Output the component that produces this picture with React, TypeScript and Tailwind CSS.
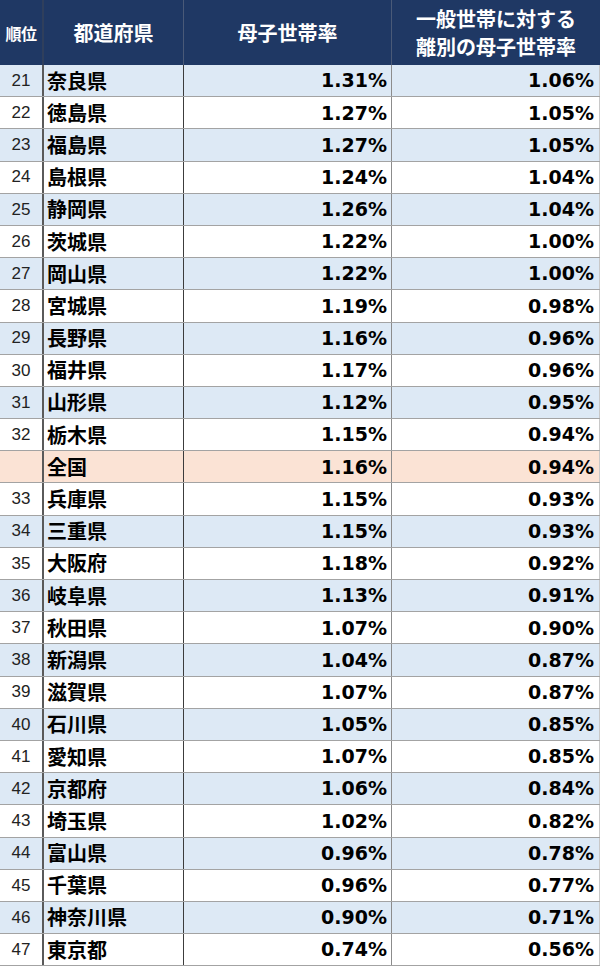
import { FC } from "react";

type Row = { rank: string; name: string; a: string; b: string; kind: "blue" | "white" | "peach" };

const data: [string, string, string, string][] = [
  ["21", "奈良県", "1.31%", "1.06%"],
  ["22", "徳島県", "1.27%", "1.05%"],
  ["23", "福島県", "1.27%", "1.05%"],
  ["24", "島根県", "1.24%", "1.04%"],
  ["25", "静岡県", "1.26%", "1.04%"],
  ["26", "茨城県", "1.22%", "1.00%"],
  ["27", "岡山県", "1.22%", "1.00%"],
  ["28", "宮城県", "1.19%", "0.98%"],
  ["29", "長野県", "1.16%", "0.96%"],
  ["30", "福井県", "1.17%", "0.96%"],
  ["31", "山形県", "1.12%", "0.95%"],
  ["32", "栃木県", "1.15%", "0.94%"],
  ["", "全国", "1.16%", "0.94%"],
  ["33", "兵庫県", "1.15%", "0.93%"],
  ["34", "三重県", "1.15%", "0.93%"],
  ["35", "大阪府", "1.18%", "0.92%"],
  ["36", "岐阜県", "1.13%", "0.91%"],
  ["37", "秋田県", "1.07%", "0.90%"],
  ["38", "新潟県", "1.04%", "0.87%"],
  ["39", "滋賀県", "1.07%", "0.87%"],
  ["40", "石川県", "1.05%", "0.85%"],
  ["41", "愛知県", "1.07%", "0.85%"],
  ["42", "京都府", "1.06%", "0.84%"],
  ["43", "埼玉県", "1.02%", "0.82%"],
  ["44", "富山県", "0.96%", "0.78%"],
  ["45", "千葉県", "0.96%", "0.77%"],
  ["46", "神奈川県", "0.90%", "0.71%"],
  ["47", "東京都", "0.74%", "0.56%"],
];

const rows: Row[] = data.map(([rank, name, a, b], i) => ({
  rank,
  name,
  a,
  b,
  kind: rank === "" ? "peach" : i % 2 === 0 ? "blue" : "white",
}));

const bgFor = {
  blue: "bg-[#dde9f5]",
  white: "bg-white",
  peach: "bg-[#fbe3d5]",
};

const jp = "font-['Noto_Sans_CJK_JP','Noto_Sans',sans-serif]";
const num = "font-['DejaVu_Sans','Noto_Sans_CJK_JP',sans-serif]";

const App: FC = () => {
  return (
    <div className="w-[600px] h-[967px] bg-white overflow-hidden text-black">
      <div className="grid grid-cols-[44px_140px_208px_208px] h-[65px] bg-[#1f3864] text-white font-bold">
        <div className={`${jp} flex items-center justify-center text-[16px] tracking-[-0.5px] border-r-2 border-[#2f3f5c]`}>
          順位
        </div>
        <div className={`${jp} flex items-center justify-center text-[20px] border-r border-[#4a5a78]`}>
          都道府県
        </div>
        <div className={`${jp} flex items-center justify-center text-[20px] border-r border-[#4a5a78]`}>
          母子世帯率
        </div>
        <div className={`${jp} flex flex-col items-center justify-center text-[20px] leading-[28px]`}>
          <span>一般世帯に対する</span>
          <span>離別の母子世帯率</span>
        </div>
      </div>
      {rows.map((r) => (
        <div
          key={r.name}
          className={`grid grid-cols-[44px_140px_208px_208px] h-[32.2px] border-b border-[#a3a3a3] ${bgFor[r.kind]}`}
        >
          <div className="flex items-center justify-center text-[17px] text-[#222] font-['Liberation_Sans',sans-serif] border-r-2 border-[#5a5a5a]">
            {r.rank}
          </div>
          <div className={`${jp} flex items-center pl-[3px] text-[20px] font-bold border-r border-[#3c3c3c]`}>
            {r.name}
          </div>
          <div className={`${num} flex items-center justify-end pr-[4px] text-[19px] font-bold border-r border-[#8c8c8c]`}>
            {r.a}
          </div>
          <div className={`${num} flex items-center justify-end pr-[5px] text-[19px] font-bold border-r border-[#c8c8c8]`}>
            {r.b}
          </div>
        </div>
      ))}
    </div>
  );
};

export default App;
